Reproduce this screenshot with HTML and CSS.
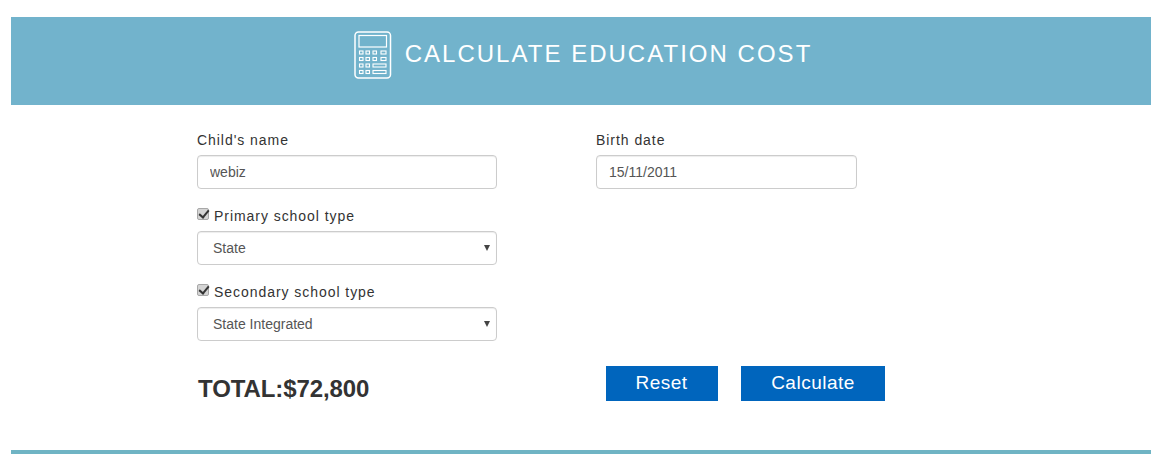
FILE: index.html
```html
<!DOCTYPE html>
<html lang="en">
<head>
<meta charset="utf-8">
<title>Calculate education cost</title>
<link rel="stylesheet" href="styles.css">
</head>
<body>
<main class="panel">
  <header class="banner">
    <svg class="calc-icon" width="38" height="48" viewBox="0 0 38 48" fill="none" stroke="#fff" stroke-width="1.2">
      <rect x="1" y="1" width="35.5" height="46" rx="3.5" stroke-width="1.5"/>
      <rect x="5" y="4.5" width="27.5" height="11.5"/>
      <g stroke-width="1.1">
        <rect x="5.5" y="20" width="3.5" height="3"/><rect x="12" y="20" width="3.5" height="3"/><rect x="19" y="20" width="3.5" height="3"/><rect x="27" y="20" width="5" height="3"/>
        <rect x="5.5" y="26.5" width="3.5" height="3"/><rect x="12" y="26.5" width="3.5" height="3"/><rect x="19" y="26.5" width="3.5" height="3"/><rect x="27" y="26.5" width="5" height="3"/>
        <rect x="5.5" y="33" width="3.5" height="3"/><rect x="12" y="33" width="3.5" height="3"/><rect x="19" y="33" width="13" height="3"/>
        <rect x="5.5" y="39.5" width="3.5" height="3"/><rect x="12" y="39.5" width="3.5" height="3"/><rect x="19" y="39.5" width="13" height="3"/>
      </g>
    </svg>
    <h1 class="title">CALCULATE EDUCATION COST</h1>
  </header>
  <form class="form">
    <div class="col col-left">
      <div class="field">
        <label class="label" for="name">Child's name</label>
        <input class="control" id="name" type="text" value="webiz">
      </div>
      <div class="field">
        <label class="label check-label"><input class="check" type="checkbox" checked>Primary school type</label>
        <div class="select"><span>State</span><i class="arrow"></i></div>
      </div>
      <div class="field">
        <label class="label check-label"><input class="check" type="checkbox" checked>Secondary school type</label>
        <div class="select"><span>State Integrated</span><i class="arrow"></i></div>
      </div>
      <div class="total">TOTAL:$72,800</div>
    </div>
    <div class="col col-right">
      <div class="field">
        <label class="label" for="birth">Birth date</label>
        <input class="control control-short" id="birth" type="text" value="15/11/2011">
      </div>
      <div class="actions">
        <button class="btn btn-reset" type="button">Reset</button>
        <button class="btn btn-calc" type="button">Calculate</button>
      </div>
    </div>
  </form>
</main>
<div class="rule"></div>
</body>
</html>
```
FILE: styles.css
```css
* { box-sizing: border-box; }
html, body { margin: 0; height: 454px; overflow: hidden; background: #fff; }
body { padding: 17px 16px 0 11px; font-family: "Liberation Sans", Arial, sans-serif; color: #333; display: flex; flex-direction: column; }
.panel { height: 433px; }
.banner { height: 88px; background: #72b3cc; display: flex; align-items: center; justify-content: center; gap: 13px; padding: 0 0 12px 4px; }
.calc-icon { display: block; }
.title { margin: 0 0 2px; font-size: 24px; font-weight: 400; letter-spacing: 2.02px; color: #fff; line-height: 30px; }
.form { display: flex; padding: 25px 0 0 186px; }
.col { display: flex; flex-direction: column; }
.col-left { width: 300px; }
.col-right { margin-left: 99px; }
.field { display: flex; flex-direction: column; margin-bottom: 17px; }
.label { font-size: 14px; line-height: 20px; letter-spacing: .95px; color: #333; margin-bottom: 6px; height: 19px; }
.check-label { display: flex; align-items: center; margin-bottom: 5px; height: 20px; }
.check { appearance: none; position: relative; flex: none; width: 12px; height: 12px; margin: 0 5px 4px 0; background: #d4d4d4; border: 1px solid #a8a8a8; border-radius: 2px; }
.check::after { content: ""; position: absolute; left: 3px; top: -1px; width: 4px; height: 8px; border: solid #333; border-width: 0 2px 2px 0; transform: rotate(40deg); }
.control { width: 300px; height: 34px; border: 1px solid #ccc; border-radius: 4px; padding: 0 12px; font: 14px "Liberation Sans", Arial, sans-serif; color: #555; background: #fff; box-shadow: inset 0 1px 1px rgba(0,0,0,.075); }
.control-short { width: 261px; }
.select { width: 300px; height: 34px; border: 1px solid #ccc; border-radius: 4px; padding: 0 6px 0 15px; display: flex; align-items: center; justify-content: space-between; font-size: 14px; color: #555; box-shadow: inset 0 1px 1px rgba(0,0,0,.075); }
.arrow { width: 0; height: 0; border-left: 3px solid transparent; border-right: 3px solid transparent; border-top: 6px solid #444; }
.total { font-size: 24px; font-weight: 700; line-height: 30px; letter-spacing: -.1px; color: #333; margin: 16px 0 0 1px; }
.actions { display: flex; gap: 23px; margin: 160px 0 0 10px; }
.btn { height: 35px; border: 0; background: #0065bd; color: #fff; font: 19px "Liberation Sans", Arial, sans-serif; letter-spacing: .5px; padding: 0 0 2px; }
.btn-reset { width: 112px; padding-right: 1px; }
.btn-calc { width: 144px; }
.rule { height: 4px; background: #6fb4c4; }
```
